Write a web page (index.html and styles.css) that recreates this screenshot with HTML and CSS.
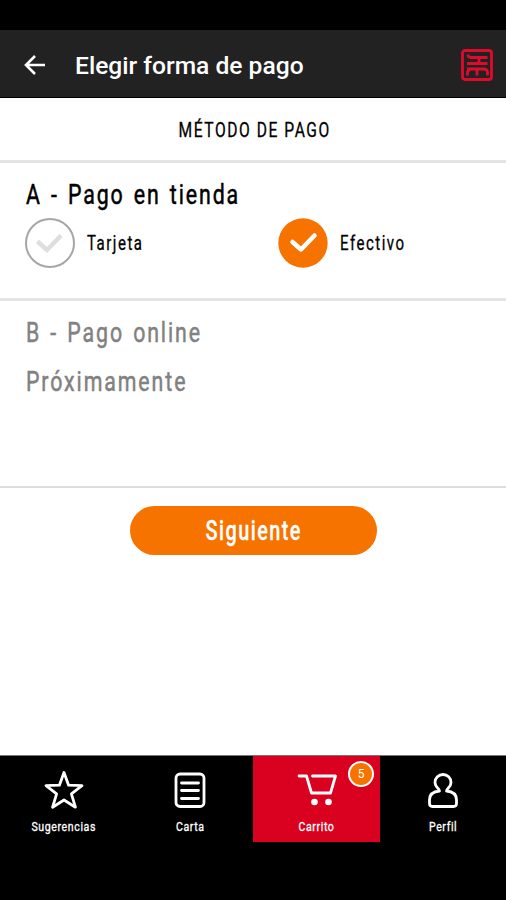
FILE: index.html
```html
<!DOCTYPE html>
<html lang="es">
<head>
<meta charset="utf-8">
<title>Elegir forma de pago</title>
<link rel="stylesheet" href="styles.css">
</head>
<body>
<div class="screen">
  <div class="statusbar"></div>
  <header class="appbar">
    <svg class="back" width="24" height="24" viewBox="0 0 24 24"><path d="M22 12H3M12 3l-9 9 9 9"/></svg>
    <h1>Elegir forma de pago</h1>
    <svg class="brand" width="32" height="32" viewBox="0 0 32 32">
      <rect x="1.5" y="1.5" width="29" height="29" rx="2.5"/>
      <path d="M7 5.500c0 2 1 3 3 3h16.500M18 8.500v5.500M6 14.500h20.500M6 20h16.500q4 0 4 3.500v3M16 20v6.500M6.500 26.500v-2q0-4 4-4.500"/>
    </svg>
  </header>
  <main>
    <div class="heading"><span class="cond c-method">MÉTODO DE PAGO</span></div>
    <section class="store">
      <h2><span class="cond c-title">A - Pago en tienda</span></h2>
      <div class="options">
        <div class="option">
          <svg width="50" height="50" viewBox="0 0 50 50"><circle class="off" cx="25" cy="25" r="24"/><path class="tick tick-off" d="M12.500 23.500l9.500 8.500 14-14.500"/></svg>
          <span class="cond">Tarjeta</span>
        </div>
        <div class="option">
          <svg width="50" height="50" viewBox="0 0 50 50"><circle class="on" cx="25" cy="25" r="24.700"/><path class="tick" d="M14.500 24l8.500 7.500L36.500 17.500"/></svg>
          <span class="cond">Efectivo</span>
        </div>
      </div>
    </section>
    <section class="online">
      <h2><span class="cond c-title">B - Pago online</span></h2>
      <p><span class="cond c-title">Próximamente</span></p>
    </section>
    <button class="next"><span class="cond c-next">Siguiente</span></button>
  </main>
  <nav>
    <div class="tab">
      <svg width="40" height="40" viewBox="0 0 40 40"><path d="M20 2.500l4.600 12.700 13.400.5-10.600 8.200 4 13.300L20 30 8.600 37.200l4-13.300L2 15.700l13.400-.5z"/></svg>
      <span class="cond">Sugerencias</span>
    </div>
    <div class="tab">
      <svg width="40" height="40" viewBox="0 0 40 40"><rect x="6" y="4" width="28" height="32.500" rx="4"/><path d="M11.500 13h17M11.500 20.500h17M11.500 28.500h17"/></svg>
      <span class="cond">Carta</span>
    </div>
    <div class="tab active">
      <svg width="40" height="40" viewBox="0 0 40 40"><path d="M2 6h7.500l5 17h19L38.500 6H15.500"/><circle class="wheel" cx="17.500" cy="32" r="3.300"/><circle class="wheel" cx="31.500" cy="32" r="3.300"/></svg>
      <span class="cond">Carrito</span>
      <span class="badge">5</span>
    </div>
    <div class="tab">
      <svg width="40" height="40" viewBox="0 0 40 40"><path d="M16.500 21c0-3-4.500-3.500-4.500-8.500a8 8 0 0 1 16 0c0 5-4.500 5.500-4.500 8.500 6 .5 10 3 10 9v3.500q0 3-3 3h-21q-3 0-3-3V30c0-6 4-8.500 10-9z"/></svg>
      <span class="cond">Perfil</span>
    </div>
  </nav>
  <div class="softkeys"></div>
</div>
</body>
</html>
```
FILE: styles.css
```css
* { box-sizing: border-box; }
body { margin: 0; background: #fff; font-family: Roboto, "Liberation Sans", sans-serif; }
.screen { width: 506px; height: 900px; display: flex; flex-direction: column; overflow: hidden; }
.statusbar { height: 30px; background: #000; }
.appbar { height: 68px; background: #222; border-bottom: 1px solid #000; display: flex; align-items: center; padding: 2px 13px 0 23px; }
.back { fill: none; stroke: #fff; stroke-width: 2.6; }
h1 { margin: 0 auto 0 28px; padding-top: 2px; color: #fff; font-size: 24.600px; line-height: 30px; font-weight: 500; white-space: nowrap; }
.brand { fill: none; stroke: #df0b2c; stroke-width: 2.800; }
h2, p { margin: 0; font-weight: 400; font-size: 27px; line-height: 32px; }
main { flex: 1; display: flex; flex-direction: column; }
.heading { height: 65px; border-bottom: 3px solid #e4e4e4; display: flex; justify-content: center; align-items: center; padding: 2px 0 0 3px; font-size: 20px; }
.cond { display: inline-block; white-space: nowrap; transform: scaleX(.75); transform-origin: left; letter-spacing: 2px; -webkit-text-stroke: .3px currentColor; }
.c-title { transform: scaleX(.79); letter-spacing: 2.400px; word-spacing: 2.500px; -webkit-text-stroke-width: .5px; }
.c-method { transform: scaleX(.78); transform-origin: center; }
.store { height: 138px; border-bottom: 3px solid #e4e4e4; padding: 16px 25px 0; }
.options { display: grid; grid-template-columns: 253px 1fr; margin-top: 7px; }
.option { display: flex; align-items: center; gap: 12px; font-size: 20px; }
.off { fill: none; stroke: #a6a6a6; stroke-width: 2; }
.on { fill: #f77300; }
.tick { fill: none; stroke: #fff; stroke-width: 4.500; stroke-linecap: round; stroke-linejoin: round; }
.tick-off { stroke: #dedede; stroke-linecap: butt; stroke-linejoin: miter; }
.online { height: 187px; border-bottom: 2px solid #dcdcdc; padding: 16px 25px 0; color: #818181; }
.online p { margin-top: 17px; }
.store h2, .online h2, .online p { padding-left: 1px; }
.next { width: 247px; height: 49px; margin: 18px auto 0 130px; border: 0; border-radius: 25px; background: #f77300; color: #fff; font: 500 27px Roboto, sans-serif; padding: 1px 0 0 1px; }
.c-next { transform: scaleX(.735); transform-origin: center; }
nav { height: 87px; background: #000; border-top: 1px solid #777; display: grid; grid-template-columns: 127px 126px 127px 126px; color: #fff; }
.tab { position: relative; display: flex; flex-direction: column; align-items: center; padding-top: 14px; font-size: 12px; line-height: 16px; }
.tab svg { fill: none; stroke: #fff; stroke-width: 2.800; stroke-linejoin: round; stroke-linecap: round; }
.tab .cond { margin-top: 9px; transform: scaleX(.88); transform-origin: center; letter-spacing: .700px; }
.tab .wheel { fill: #fff; stroke: none; }
.active { background: #d90020; }
.badge { position: absolute; left: 95px; top: 5px; width: 26px; height: 26px; border: 2.500px solid #fff; border-radius: 50%; background: #f77300; font-size: 12px; line-height: 22px; text-align: center; }
.softkeys { height: 58px; background: #000; }
```
